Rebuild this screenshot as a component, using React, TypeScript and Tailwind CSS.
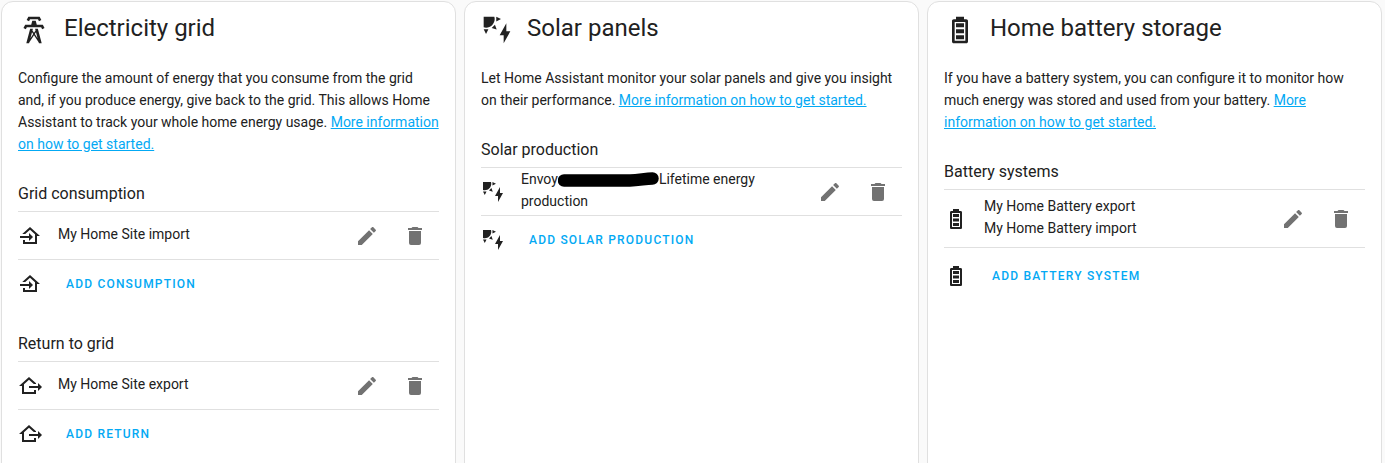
import type { ReactNode } from 'react';
import clsx from 'clsx';

const ICONS = {
  tower:
    'M8.28,5.45L6.5,4.55L7.76,2H16.23L17.5,4.55L15.72,5.44L15,4H9L8.28,5.45M18.62,8H14.09L13.3,5H10.7L9.91,8H5.38L4.1,10.55L5.89,11.44L6.62,10H17.38L18.1,11.45L19.89,10.56L18.62,8M17.77,22H15.7L15.46,21.1L12,15.9L8.53,21.1L8.3,22H6.23L9.12,11H11.19L10.83,12.35L12,14.1L13.16,12.35L12.81,11H14.88L17.77,22M11.4,15L10.5,13.65L9.32,18.13L11.4,15M14.68,18.12L13.5,13.64L12.6,15L14.68,18.12Z',
  solar:
    'M11.45,2V5.55L15,3.77L11.45,2M10.45,8L8,10.46L11.75,11.71L10.45,8M2,11.45L3.77,15L5.55,11.45H2M10,2H2V10C2.57,10.17 3.17,10.25 3.77,10.25C7.35,10.26 10.26,7.35 10.27,3.75C10.26,3.16 10.17,2.57 10,2M17,22V16H14L19,7V13H22L17,22Z',
  battery:
    'M16 20H8V6H16M16.67 4H15V2H9V4H7.33C6.6 4 6 4.6 6 5.33V20.67C6 21.4 6.6 22 7.33 22H16.67C17.41 22 18 21.41 18 20.67V5.33C18 4.6 17.4 4 16.67 4M15 16H9V19H15V16M15 7H9V10H15V7M15 11.5H9V14.5H15V11.5Z',
  homeImport: 'M15 13L11 17V14H2V12H11V9L15 13M5 20V16H7V18H17V10.19L12 5.69L7.21 10H4.22L12 3L22 12H19V20H5Z',
  homeExport:
    'M24 13L20 17V14H11V12H20V9L24 13M4 20V12H1L11 3L18 9.3V10H15.79L11 5.69L6 10.19V18H16V16H18V20H4Z',
  pencil:
    'M20.71,7.04C21.1,6.65 21.1,6 20.71,5.63L18.37,3.29C18,2.9 17.35,2.9 16.96,3.29L15.12,5.12L18.87,8.87M3,17.25V21H6.75L17.81,9.93L14.06,6.18L3,17.25Z',
  trash: 'M19,4H15.5L14.5,3H9.5L8.5,4H5V6H19M6,19A2,2 0 0,0 8,21H16A2,2 0 0,0 18,19V7H6V19Z',
};

type IconName = keyof typeof ICONS;

function Icon({ name, className = 'size-6' }: { name: IconName; className?: string }) {
  return (
    <svg viewBox="0 0 24 24" fill="currentColor" aria-hidden="true" className={clsx('shrink-0', className)}>
      <path d={ICONS[name]} />
    </svg>
  );
}

function IconButton({ icon, label }: { icon: IconName; label: string }) {
  return (
    <button type="button" aria-label={label} className="flex w-12 shrink-0 justify-center text-[#727272]">
      <Icon name={icon} />
    </button>
  );
}

function MoreLink() {
  return (
    <a href="#docs" className="text-[#03a9f4] underline">
      More information on how to get started.
    </a>
  );
}

// Marker stroke that hides the serial number
function Redacted() {
  return (
    <svg viewBox="0 0 101 16" aria-hidden="true" className="inline-block h-4 w-[101px] align-middle">
      <path d="M6 8.500H72C81 8.500 87 6.500 94.500 6.500" fill="none" stroke="#000" strokeWidth="12.500" strokeLinecap="round" />
    </svg>
  );
}

interface SourceSectionProps {
  title: string;
  icon: IconName;
  addLabel: string;
  tall?: boolean;
  children: ReactNode;
}

function SourceSection({ title, icon, addLabel, tall, children }: SourceSectionProps) {
  return (
    <section className="mt-6">
      <h3 className="border-b border-[#e0e0e0] pb-[5px] text-base leading-6">{title}</h3>
      <div
        className={clsx(
          'flex items-center border-b border-[#e0e0e0]',
          tall ? 'min-h-[58px]' : 'min-h-12',
        )}
      >
        <Icon name={icon} />
        <div className="ml-4 flex-1 pb-[3px]">{children}</div>
        <IconButton icon="pencil" label={`Edit ${title}`} />
        <IconButton icon="trash" label={`Delete ${title}`} />
      </div>
      <div className={clsx('flex items-center', tall ? 'min-h-14' : 'min-h-12')}>
        <Icon name={icon} />
        <button type="button" className="ml-4 px-2 text-xs font-medium uppercase tracking-widest text-[#03a9f4]">
          {addLabel}
        </button>
      </div>
    </section>
  );
}

interface EnergyCardProps {
  title: string;
  icon: IconName;
  description: string;
  children: ReactNode;
}

function EnergyCard({ title, icon, description, children }: EnergyCardProps) {
  return (
    <article className="rounded-xl border border-[#e0e0e0] bg-white px-4 pt-3 pb-4">
      <h2 className="flex items-start gap-3.5 text-2xl leading-7">
        <Icon name={icon} className="size-8" />
        {title}
      </h2>
      <p className="mt-[21px] pb-[3px]">
        {description} <MoreLink />
      </p>
      {children}
    </article>
  );
}

export default function App() {
  return (
    <main className="grid h-screen grid-cols-3 gap-2 overflow-hidden bg-[#fafafa] pt-px pr-[3px] pl-px font-['Roboto',sans-serif] text-sm leading-[22px] text-[#212121]">
      <EnergyCard
        title="Electricity grid"
        icon="tower"
        description="Configure the amount of energy that you consume from the grid and, if you produce energy, give back to the grid. This allows Home Assistant to track your whole home energy usage."
      >
        <SourceSection title="Grid consumption" icon="homeImport" addLabel="Add consumption">
          My Home Site import
        </SourceSection>
        <SourceSection title="Return to grid" icon="homeExport" addLabel="Add return">
          My Home Site export
        </SourceSection>
      </EnergyCard>

      <EnergyCard
        title="Solar panels"
        icon="solar"
        description="Let Home Assistant monitor your solar panels and give you insight on their performance."
      >
        <SourceSection title="Solar production" icon="solar" addLabel="Add solar production">
          Envoy
          <Redacted />
          Lifetime energy production
        </SourceSection>
      </EnergyCard>

      <EnergyCard
        title="Home battery storage"
        icon="battery"
        description="If you have a battery system, you can configure it to monitor how much energy was stored and used from your battery."
      >
        <SourceSection title="Battery systems" icon="battery" addLabel="Add battery system" tall>
          <div>My Home Battery export</div>
          <div>My Home Battery import</div>
        </SourceSection>
      </EnergyCard>
    </main>
  );
}
